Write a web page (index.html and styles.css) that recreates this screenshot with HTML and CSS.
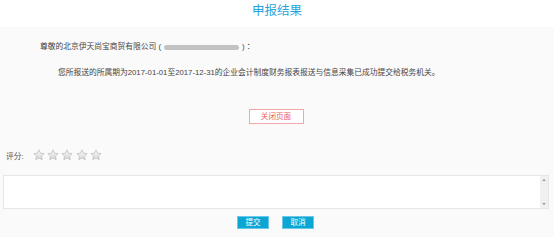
FILE: index.html
```html
<!DOCTYPE html>
<html lang="zh">
<head>
<meta charset="utf-8">
<title>申报结果</title>
<link rel="stylesheet" href="styles.css">
</head>
<body>
<header class="header"><h1 class="title">申报结果</h1></header>
<main class="main">
  <p class="greeting">尊敬的北京伊天尚宝商贸有限公司 (<span class="masked"></span>) ：</p>
  <p class="message">您所报送的所属期为2017-01-01至2017-12-31的企业会计制度财务报表报送与信息采集已成功提交给税务机关。</p>
  <div class="close-row"><button class="close-btn">关闭页面</button></div>
  <div class="rating">
    <span class="rating-label">评分:</span>
    <div class="stars">
      <svg class="star" viewBox="0 0 24 24"><defs><linearGradient id="sg" x1="0" y1="0" x2="0" y2="1"><stop offset="0" stop-color="#fbfbfb"/><stop offset="1" stop-color="#d6d6d6"/></linearGradient></defs><path d="M12 1.8l3.1 6.6 7.1.9-5.2 4.9 1.4 7.1L12 17.8l-6.4 3.5 1.4-7.1-5.2-4.9 7.1-.9z" fill="url(#sg)" stroke="#b8b8b8" stroke-width="1.4" stroke-linejoin="round"/></svg>
      <svg class="star" viewBox="0 0 24 24"><path d="M12 1.8l3.1 6.6 7.1.9-5.2 4.9 1.4 7.1L12 17.8l-6.4 3.5 1.4-7.1-5.2-4.9 7.1-.9z" fill="url(#sg)" stroke="#b8b8b8" stroke-width="1.4" stroke-linejoin="round"/></svg>
      <svg class="star" viewBox="0 0 24 24"><path d="M12 1.8l3.1 6.6 7.1.9-5.2 4.9 1.4 7.1L12 17.8l-6.4 3.5 1.4-7.1-5.2-4.9 7.1-.9z" fill="url(#sg)" stroke="#b8b8b8" stroke-width="1.4" stroke-linejoin="round"/></svg>
      <svg class="star" viewBox="0 0 24 24"><path d="M12 1.8l3.1 6.6 7.1.9-5.2 4.9 1.4 7.1L12 17.8l-6.4 3.5 1.4-7.1-5.2-4.9 7.1-.9z" fill="url(#sg)" stroke="#b8b8b8" stroke-width="1.4" stroke-linejoin="round"/></svg>
      <svg class="star" viewBox="0 0 24 24"><path d="M12 1.8l3.1 6.6 7.1.9-5.2 4.9 1.4 7.1L12 17.8l-6.4 3.5 1.4-7.1-5.2-4.9 7.1-.9z" fill="url(#sg)" stroke="#b8b8b8" stroke-width="1.4" stroke-linejoin="round"/></svg>
    </div>
  </div>
  <div class="comment">
    <textarea class="comment-input"></textarea>
    <div class="scrollbar">
      <span class="arrow arrow-up"></span>
      <span class="arrow arrow-down"></span>
    </div>
  </div>
  <div class="actions">
    <button class="btn">提交</button>
    <button class="btn">取消</button>
  </div>
</main>
</body>
</html>
```
FILE: styles.css
```css
* { box-sizing: border-box; }
html, body { margin: 0; padding: 0; background: #fff; }
body {
  font-family: "Liberation Sans", "Noto Sans CJK SC", sans-serif;
  color: #444;
  font-size: 7.75px;
}
.header {
  height: 27px;
  padding-top: 2px;
  text-align: center;
}
.title {
  margin: 0;
  font-size: 12.5px;
  font-weight: normal;
  line-height: 18px;
  color: #2aa3da;
}
.main {
  background: #fafafa;
  height: 210px;
  padding-top: 14px;
  display: flex;
  flex-direction: column;
}
.greeting {
  margin: 0;
  padding-left: 40px;
  line-height: 12px;
  display: flex;
  align-items: center;
}
.masked {
  display: inline-block;
  width: 75px;
  height: 5px;
  margin: 1px 3px 0 3px;
  border-radius: 3px;
  background: #c2c2c2;
  filter: blur(0.4px);
}
.message {
  margin: 14px 0 0 0;
  padding-left: 58px;
  line-height: 12px;
}
.close-row {
  margin-top: 30px;
  display: flex;
  justify-content: center;
}
.close-btn {
  width: 55px;
  height: 15px;
  margin-left: -2px;
  padding: 0;
  border: 1px solid #f4a5a5;
  background: #fff;
  color: #e8605f;
  font-family: inherit;
  font-size: 7.6px;
  line-height: 13px;
}
.rating {
  margin-top: 24px;
  height: 14px;
  display: flex;
  align-items: center;
  padding-left: 6px;
}
.rating-label {
  width: 27px;
  color: #555;
}
.stars {
  display: flex;
  gap: 2.2px;
}
.star {
  width: 12px;
  height: 12px;
  display: block;
}
.comment {
  margin: 13px 3px 0 3px;
  height: 34px;
  width: 546px;
  display: flex;
  border: 1px solid #e6e6e6;
  background: #fff;
}
.comment-input {
  flex: 1;
  border: none;
  resize: none;
  outline: none;
  background: #fff;
  overflow: hidden;
  padding: 2px;
  font-family: inherit;
}
.scrollbar {
  width: 8px;
  background: #f0f0f0;
  display: flex;
  flex-direction: column;
  justify-content: space-between;
  align-items: center;
  padding: 3px 0;
}
.arrow {
  width: 0;
  height: 0;
  border-left: 2px solid transparent;
  border-right: 2px solid transparent;
}
.arrow-up { border-bottom: 2px solid #999; }
.arrow-down { border-top: 2px solid #999; }
.actions {
  margin-top: 7px;
  padding-right: 3px;
  display: flex;
  justify-content: center;
  gap: 13px;
}
.btn {
  width: 32px;
  height: 13px;
  padding: 0;
  border: 1px solid #6cc8e6;
  background: #0ba6d3;
  color: #fff;
  font-family: inherit;
  font-size: 7.6px;
  line-height: 11px;
}
```
